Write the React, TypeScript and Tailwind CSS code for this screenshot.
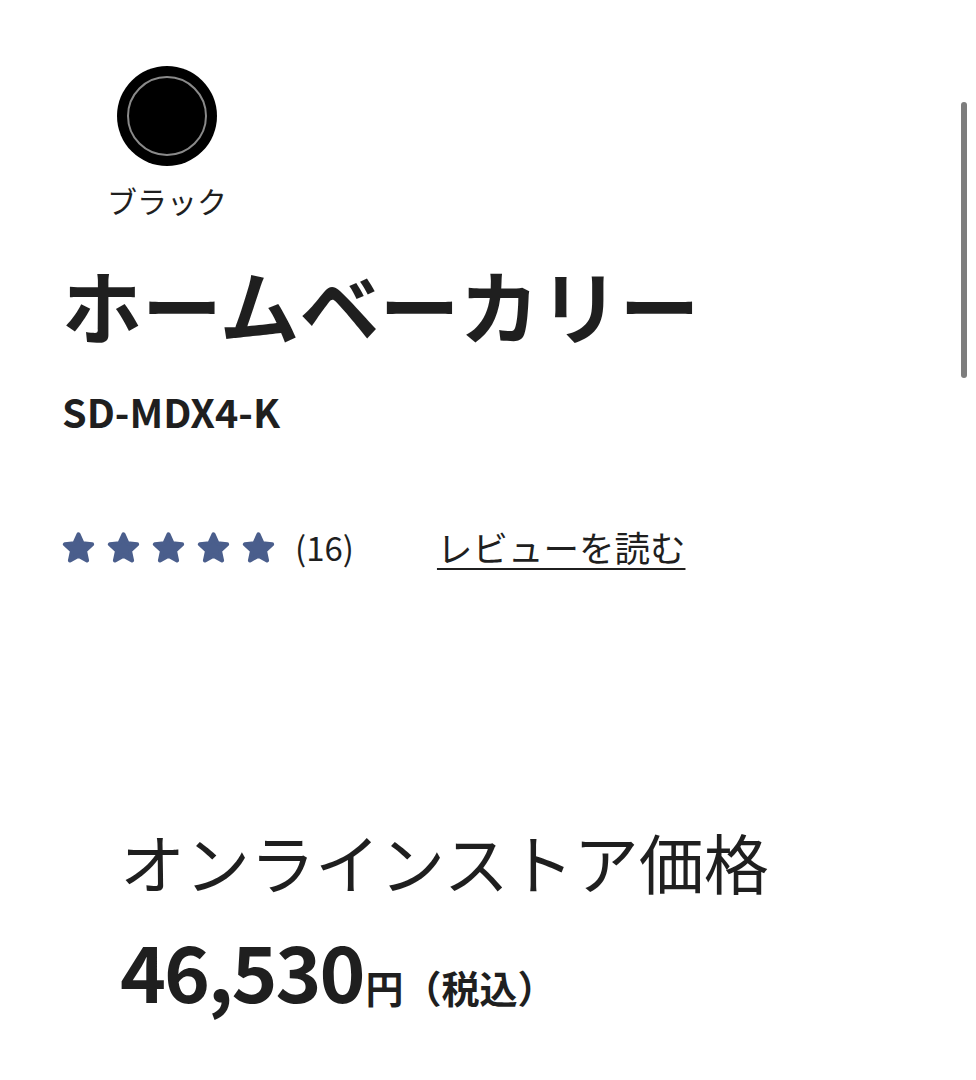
import React from "react"

const font = { fontFamily: '"Noto Sans CJK JP", "Noto Sans", sans-serif' }

const Star = () => (
	<svg width="33" height="31" viewBox="0.7 0.6 22.6 21.4" className="shrink-0">
		<polygon
			points="12,2.2 14.8,8.4 21.4,9.1 16.5,13.6 17.9,20.2 12,16.9 6.1,20.2 7.5,13.6 2.6,9.1 9.2,8.4"
			fill="#4a5e8c"
			stroke="#4a5e8c"
			strokeWidth="2.8"
			strokeLinejoin="round"
		/>
	</svg>
)

const App = () => {
	return (
		<div
			className="relative w-[976px] h-[1080px] overflow-hidden bg-white text-[#1f1f1f]"
			style={font}
		>
			<div className="flex flex-col pl-[62px] pt-[66px]">
				<div className="flex flex-col items-center w-[120px] ml-[45px]">
					<div className="w-[100px] h-[100px] rounded-full bg-black flex items-center justify-center">
						<div className="w-[80px] h-[80px] rounded-full border-2 border-[#8a8a8a]" />
					</div>
					<span className="mt-[19px] text-[30px] leading-none whitespace-nowrap">
						ブラック
					</span>
				</div>

				<h1 className="mt-[48px] text-[80px] font-bold leading-none whitespace-nowrap">
					ホームベーカリー
				</h1>

				<p className="mt-[48px] text-[39.5px] font-bold leading-none">
					SD-MDX4-K
				</p>

				<div className="mt-[100px] flex items-center h-[33px]">
					<div className="flex items-center gap-[12px]">
						<Star />
						<Star />
						<Star />
						<Star />
						<Star />
					</div>
					<span className="ml-[20px] text-[33px] leading-none">(16)</span>
					<a
						href="#"
						className="ml-[83px] text-[35.5px] leading-none underline decoration-2 underline-offset-[6px] whitespace-nowrap"
					>
						レビューを読む
					</a>
				</div>
			</div>

			<div className="flex flex-col pl-[120px] mt-[265px]">
				<h2 className="text-[65px] leading-none whitespace-nowrap">
					オンラインストア価格
				</h2>
				<div className="mt-[36px] flex items-baseline leading-none font-bold">
					<span className="text-[78px] tracking-[-2px]">46,530</span>
					<span className="ml-[2px] text-[38px]">円</span>
					<span className="text-[38px]">（税込）</span>
				</div>
			</div>

			<div className="absolute right-[9px] top-[102px] w-[6px] h-[276px] rounded-full bg-[#7d7d7d]" />
		</div>
	)
}

export default App
